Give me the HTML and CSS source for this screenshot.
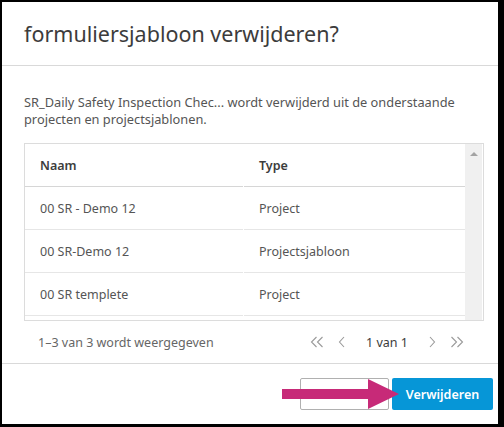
FILE: index.html
```html
<!DOCTYPE html>
<html lang="nl">
<head>
<meta charset="utf-8">
<link rel="stylesheet" href="styles.css">
</head>
<body>
<div class="dialog">
  <div class="header"><h1 class="title">formuliersjabloon verwijderen?</h1></div>
  <div class="content">
    <p class="desc">SR_Daily Safety Inspection Chec... wordt verwijderd uit de onderstaande projecten en projectsjablonen.</p>
    <div class="tablebox">
      <div class="rows">
        <div class="row head"><div class="cell c1">Naam</div><div class="cell c2">Type</div></div>
        <div class="row"><div class="cell c1">00 SR - Demo 12</div><div class="cell c2">Project</div></div>
        <div class="row"><div class="cell c1">00 SR-Demo 12</div><div class="cell c2">Projectsjabloon</div></div>
        <div class="row"><div class="cell c1">00 SR templete</div><div class="cell c2">Project</div></div>
      </div>
      <div class="scrollbar"><span class="up"></span></div>
    </div>
    <div class="pager">
      <span class="count">1–3 van 3 wordt weergegeven</span>
      <div class="nav">
        <svg class="ico" width="14" height="12" viewBox="0 0 14 12"><path d="M6.5 1 L1.5 6 L6.5 11 M12.5 1 L7.5 6 L12.5 11" fill="none" stroke="#9a9a9a" stroke-width="1.1"/></svg>
        <svg class="ico" width="8" height="12" viewBox="0 0 8 12"><path d="M6 1 L1.5 6 L6 11" fill="none" stroke="#9a9a9a" stroke-width="1.1"/></svg>
        <span class="page">1 van 1</span>
        <svg class="ico" width="8" height="12" viewBox="0 0 8 12"><path d="M2 1 L6.5 6 L2 11" fill="none" stroke="#9a9a9a" stroke-width="1.1"/></svg>
        <svg class="ico" width="14" height="12" viewBox="0 0 14 12"><path d="M1.5 1 L6.5 6 L1.5 11 M7.5 1 L12.5 6 L7.5 11" fill="none" stroke="#9a9a9a" stroke-width="1.1"/></svg>
      </div>
    </div>
  </div>
  <div class="footer">
    <button class="btn cancel"></button>
    <button class="btn primary">Verwijderen</button>
  </div>
  <svg class="arrow" width="118" height="32" viewBox="0 0 118 32"><polygon points="0,11 86,11 86,1 117,16 86,31 86,21 0,21" fill="#c72a78"/></svg>
</div>
</body>
</html>
```
FILE: styles.css
```css
html, body { margin: 0; padding: 0; }
body { background: #000; width: 504px; height: 427px; overflow: hidden; font-family: "Noto Sans", "Open Sans", sans-serif; }
.dialog { position: relative; margin: 2px 6px 0 2px; width: 496px; height: 422px; background: #fff; display: flex; flex-direction: column; }
.header { height: 63px; border-bottom: 1px solid #d9d9d9; display: flex; align-items: center; padding-left: 22px; }
.title { margin: 0; font-size: 21.5px; font-weight: 400; color: #3c3c3c; }
.content { padding: 0 14px 0 22px; border-bottom: 1px solid #d9d9d9; }
.desc { margin: 28px 0 0 0; font-size: 12.8px; line-height: 17px; color: #555; width: 455px; }
.tablebox { margin-top: 15px; height: 176px; border: 1px solid #dcdcdc; display: flex; overflow: hidden; }
.rows { width: 440px; }
.row { display: flex; height: 43px; }
.row.head { height: 43px; }
.cell { display: flex; align-items: center; padding-left: 15px; border-bottom: 1px solid #e6e6e6; font-size: 12.5px; color: #555; box-sizing: border-box; }
.head .cell { font-weight: 600; color: #3c3c3c; border-bottom-color: #d6d6d6; }
.c1 { width: 218px; margin-right: 1px; }
.c2 { width: 221px; padding-left: 15px; }
.scrollbar { width: 17px; background: #f0f0f0; position: relative; }
.up { display: block; width: 0; height: 0; margin: 8px auto 0; border-left: 4px solid transparent; border-right: 4px solid transparent; border-bottom: 4px solid #a3a3a3; }
.pager { height: 42px; display: flex; align-items: center; justify-content: space-between; padding: 0 20px 0 14px; }
.count { font-size: 12.5px; color: #666; }
.nav { display: flex; align-items: center; gap: 14px; }
.page { font-size: 12.5px; color: #3c3c3c; margin: 0 6px; }
.ico { display: block; }
.footer { flex: 1; display: flex; justify-content: flex-end; align-items: flex-start; padding: 14px 5px 0 0; gap: 3px; }
.btn { height: 32px; font-family: inherit; border-radius: 2px; padding: 0; }
.cancel { width: 89px; background: #fff; border: 1px solid #b0b0b0; }
.primary { width: 101px; background: #0696d7; border: none; color: #fff; font-weight: 600; font-size: 12.5px; }
.arrow { position: absolute; left: 280px; top: 376px; }
```
